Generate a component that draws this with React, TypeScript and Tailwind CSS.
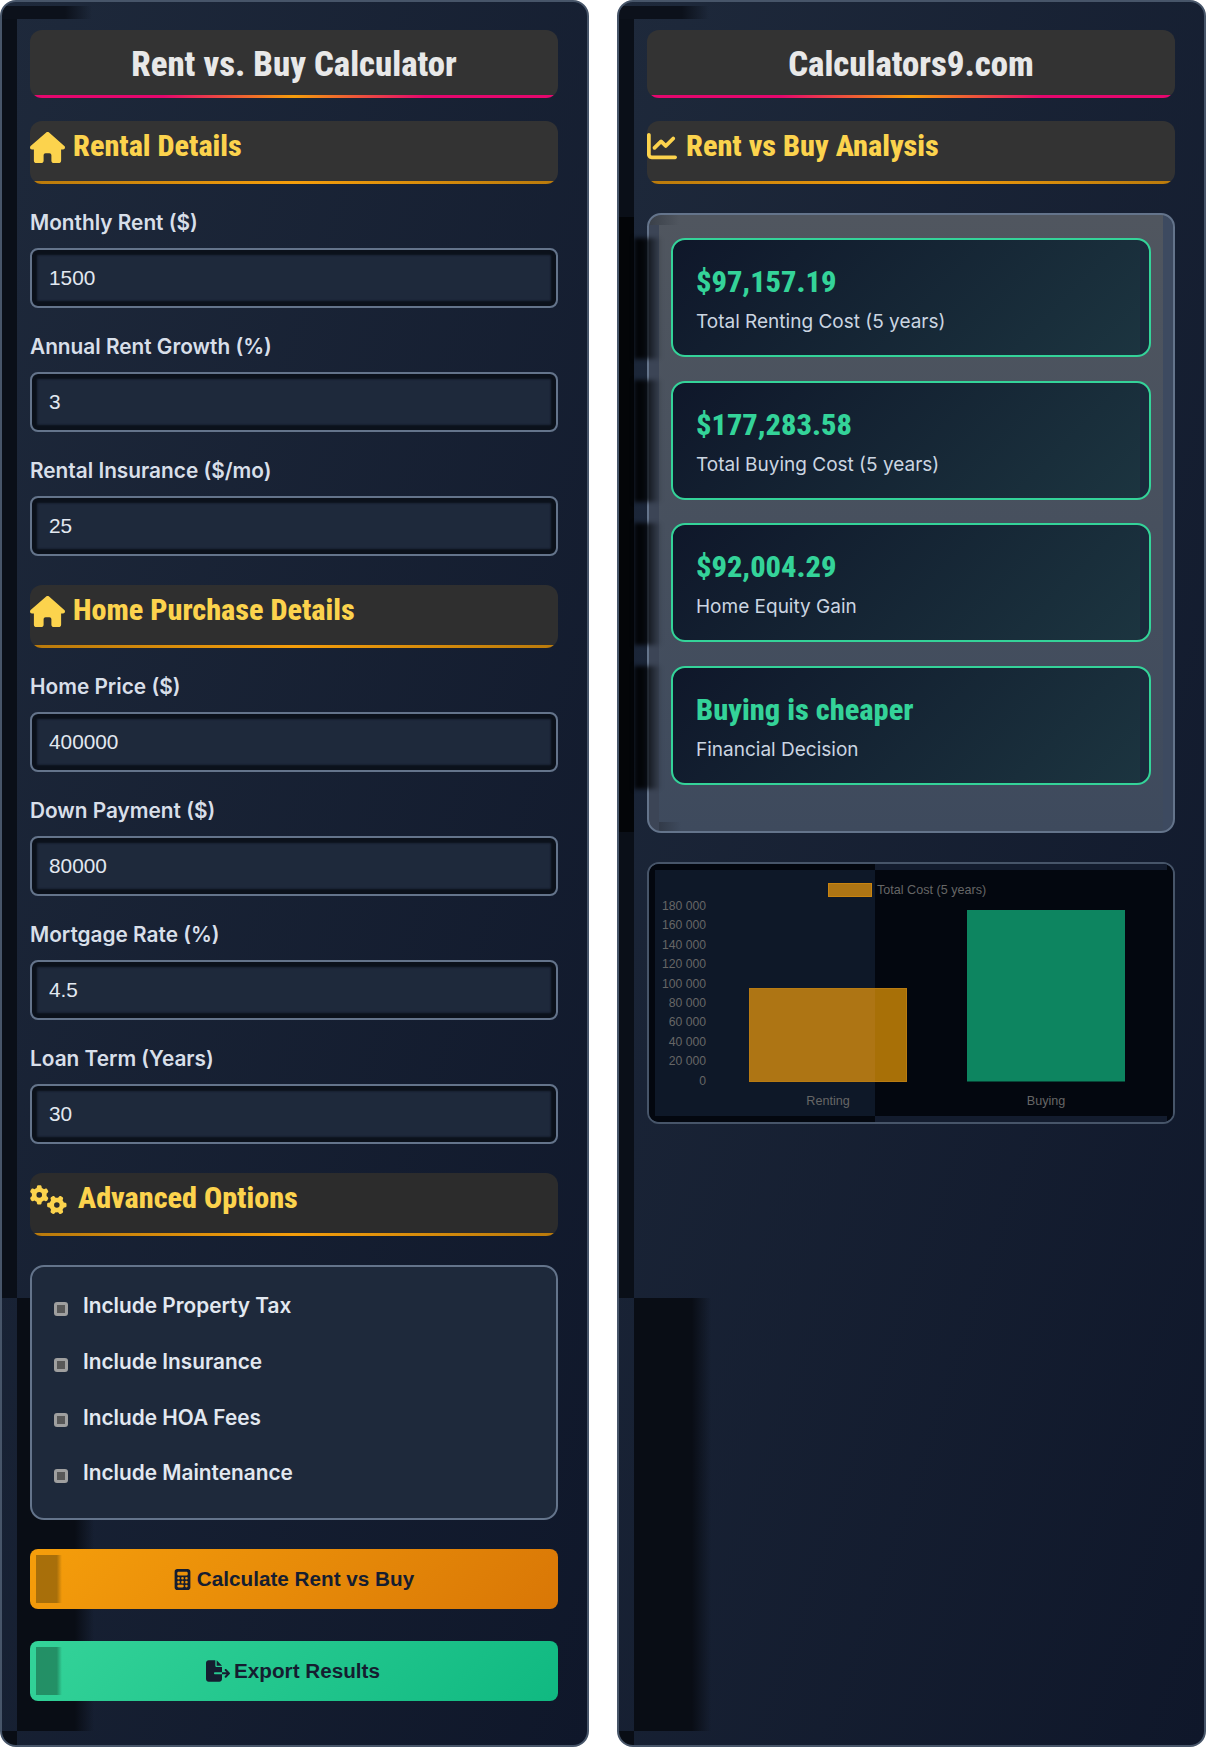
import { FaCalculator, FaChartLine, FaFileExport, FaGears, FaHouse } from "react-icons/fa6";
import type { ReactNode } from "react";

const condensed = "font-['Roboto',sans-serif] font-extrabold [font-stretch:75%]";
const inter = "font-['Inter',sans-serif]";
const panel = "h-[1747px] overflow-hidden rounded-[16px] border-2 border-[#475569] pl-[28px] pr-[29px] pt-[28px]";
const Icon = "text-[#fcd34d] shrink-0";

const Title = ({ children }: { children: ReactNode }) => (
  <div className="flex h-[68px] items-center justify-center rounded-[12px] [background:linear-gradient(to_right,#e6076e_25%,#f59e0b,#e6076e_75%)_bottom/calc(100%-4px)_3px_no-repeat,#333333]">
    <h1 className={`${condensed} text-[34.8px] text-[#e8e8e8]`}>{children}</h1>
  </div>
);

const Section = ({ icon, children, className }: { icon: ReactNode; children: ReactNode; className: string }) => (
  <div className={`flex h-[63px] items-start gap-[8px] rounded-[12px] pt-[2px] ${className}`}>
    {icon}
    <h2 className={`${condensed} text-[30.2px] text-[#fcd34d]`}>{children}</h2>
  </div>
);

const Field = ({ label, value }: { label: string; value: string }) => (
  <div className="flex h-[100px] flex-col">
    <label className={`${inter} h-[40px] text-[20.8px] font-semibold leading-[30px] text-[#d8dfe9]`}>{label}</label>
    <input
      readOnly
      value={value}
      className="h-[60px] w-full rounded-[8px] border-2 border-[#64748b] bg-[#1e293b] pl-[17px] font-['Liberation_Sans',sans-serif] text-[20.8px] text-[#e2e8f0] shadow-[inset_0_0_2px_5px_#0b111b] outline-none"
    />
  </div>
);

const Check = ({ label }: { label: string }) => (
  <div className="flex h-[55.7px] items-center gap-[15px]">
    <div className="mt-[6px] flex h-[14px] w-[14px] items-center justify-center rounded-[3px] bg-[#9f9f9f]">
      <div className="h-[8px] w-[8px] bg-[#585858]" />
    </div>
    <span className={`${inter} text-[20.8px] font-semibold text-[#e2e8f0]`}>{label}</span>
  </div>
);

const Btn = ({ icon, label, className }: { icon: ReactNode; label: string; className: string }) => (
  <button className={`flex h-[60px] w-full items-center justify-center gap-[4px] rounded-[8px] pr-[2px] font-['Liberation_Sans',sans-serif] text-[20.7px] font-bold text-[#151d30] ${className}`}>
    {icon}
    <span>{label}</span>
  </button>
);

const Card = ({ value, label }: { value: string; label: string }) => (
  <div className="h-[119px] rounded-[14px] border-2 border-[#34d399] pl-[23px] pt-[19px] [background:linear-gradient(#1a2a3c,#1a2a3c)_right/9px_100%_no-repeat,linear-gradient(135deg,#0f172a,#1c3540)]">
    <div className={`${condensed} text-[30.4px] leading-[46px] text-[#34d399]`}>{value}</div>
    <div className={`${inter} mt-[3px] text-[19px] leading-[28px] text-[#cbd5e1]`}>{label}</div>
  </div>
);

const ticks = ["180 000", "160 000", "140 000", "120 000", "100 000", "80 000", "60 000", "40 000", "20 000", "0"];

const Chart = () => (
  <svg viewBox="0 0 524 258" className="block h-[258px] w-[524px]" fontFamily="'Liberation Sans', sans-serif" fontSize="12.6" fill="#666666">
    <rect width="524" height="258" fill="#0f172a" />
    <rect x="226" width="298" height="258" fill="#131c2e" />
    <rect x="6" y="6" width="220" height="246" fill="#0e1828" />
    <rect x="226" y="6" width="292" height="246" fill="#03070f" />
    <rect x="0" width="226" height="6" fill="#03070f" />
    <rect x="0" y="252" width="226" height="6" fill="#03070f" />
    <rect x="0" width="6" height="258" fill="#03070f" />
    <rect x="518" width="6" height="258" fill="#03070f" />
    {ticks.map((t, i) => (
      <text key={t} x="57" y={42 + i * 19.4 + 4} textAnchor="end" fontSize="12.2">{t}</text>
    ))}
    <rect x="179.5" y="19.5" width="43" height="13" fill="#ae7514" stroke="#c98410" />
    <text x="228" y="29.5">Total Cost (5 years)</text>
    <rect x="100.5" y="124.5" width="157" height="93" fill="#ae7514" stroke="#b87b12" />
    <rect x="226" y="125" width="31" height="92" fill="#a87007" />
    <rect x="318" y="46" width="158" height="171.5" fill="#0d8560" />
    <text x="179" y="241" textAnchor="middle">Renting</text>
    <text x="397" y="241" textAnchor="middle">Buying</text>
  </svg>
);

export default function App() {
  return (
    <div className="grid h-[1747px] w-[1206px] grid-cols-[589px_589px] gap-[28px] bg-white">
      <div className={`${panel} [background:linear-gradient(#0a0f18,#0a0f18)_0_17px/15px_1279px_no-repeat,linear-gradient(to_right,#0c111b_70%,transparent)_0_4px/90px_13px_no-repeat,linear-gradient(to_right,#090d15_75%,transparent)_15px_1296px/77px_433px_no-repeat,linear-gradient(#090d15,#090d15)_0_1729px/15px_16px_no-repeat,linear-gradient(to_bottom_right,#1e293b,#0f172a)]`}>
        <div className="flex flex-col gap-[29px]">
          <div className="flex flex-col gap-[24px]">
            <div className="flex flex-col gap-[23px]">
              <Title>Rent vs. Buy Calculator</Title>
              <Section
                className="[background:linear-gradient(to_right,#b97a0c,#f59e0b,#b97a0c)_bottom/calc(100%-4px)_3px_no-repeat,#333333]"
                icon={<FaHouse size={35} className={`${Icon} mt-[7px]`} />}
              >
                Rental Details
              </Section>
            </div>
            <Field label="Monthly Rent ($)" value="1500" />
            <Field label="Annual Rent Growth (%)" value="3" />
            <Field label="Rental Insurance ($/mo)" value="25" />
          </div>
          <div className="flex flex-col gap-[24px]">
            <Section
              className="[background:linear-gradient(to_right,#b97a0c,#f59e0b,#b97a0c)_bottom/calc(100%-4px)_3px_no-repeat,#2f2f2f]"
              icon={<FaHouse size={35} className={`${Icon} mt-[7px]`} />}
            >
              Home Purchase Details
            </Section>
            <Field label="Home Price ($)" value="400000" />
            <Field label="Down Payment ($)" value="80000" />
            <Field label="Mortgage Rate (%)" value="4.5" />
            <Field label="Loan Term (Years)" value="30" />
          </div>
          <Section
            className="[background:linear-gradient(to_right,#b97a0c,#f59e0b,#b97a0c)_bottom/calc(100%-4px)_3px_no-repeat,#2c2c2c]"
            icon={<FaGears size={37} className={`${Icon} mr-[3px] mt-[6px]`} />}
          >
            Advanced Options
          </Section>
          <div className="flex h-[255px] flex-col rounded-[14px] border-2 border-[#64748b] bg-[#1e293b] pl-[22px] pt-[11px]">
            <Check label="Include Property Tax" />
            <Check label="Include Insurance" />
            <Check label="Include HOA Fees" />
            <Check label="Include Maintenance" />
          </div>
          <div className="flex flex-col gap-[32px]">
            <Btn
              icon={<FaCalculator size={21} />}
              label="Calculate Rent vs Buy"
              className="[background:linear-gradient(to_right,#a86f0a_80%,transparent)_6px_6px/26px_48px_no-repeat,linear-gradient(135deg,#f59e0b,#d97706)]"
            />
            <Btn
              icon={<FaFileExport size={24} />}
              label="Export Results"
              className="[background:linear-gradient(to_right,#239066_80%,transparent)_6px_6px/26px_48px_no-repeat,linear-gradient(135deg,#34d399,#10b981)]"
            />
          </div>
        </div>
      </div>

      <div className={`relative ${panel} [background:linear-gradient(#030508,#030508)_0_215px/15px_615px_no-repeat,linear-gradient(#0a0f18,#0a0f18)_0_17px/15px_1279px_no-repeat,linear-gradient(to_right,#0c111b_70%,transparent)_0_4px/90px_13px_no-repeat,linear-gradient(to_right,#090d15_75%,transparent)_15px_1296px/77px_433px_no-repeat,linear-gradient(#090d15,#090d15)_0_1729px/15px_16px_no-repeat,linear-gradient(to_bottom_right,#1e293b,#0f172a)]`}>
        <div className="flex flex-col gap-[29px]">
          <div className="flex flex-col gap-[23px]">
            <Title>Calculators9.com</Title>
            <Section
              className="[background:linear-gradient(to_right,#b97a0c,#f59e0b,#b97a0c)_bottom/calc(100%-4px)_3px_no-repeat,#333333]"
              icon={<FaChartLine size={30} className={`${Icon} mr-[1px] mt-[8px]`} />}
            >
              Rent vs Buy Analysis
            </Section>
          </div>
          <div className="flex h-[620px] flex-col gap-[23.7px] rounded-[14px] border-2 border-[#64748b] p-[22px] pt-[23px] [background:linear-gradient(#3c4556,#3c4556)_0_10px/10px_100%_no-repeat,linear-gradient(to_right,#3a4049,transparent)_0_0/30px_10px_no-repeat,linear-gradient(to_right,#2c333f,transparent)_0_100%/32px_9px_no-repeat,linear-gradient(#3d4a60,#3d4a60)_100%_0/10px_100%_no-repeat,linear-gradient(#50565f,#3e4a5d)]">
            <Card value="$97,157.19" label="Total Renting Cost (5 years)" />
            <Card value="$177,283.58" label="Total Buying Cost (5 years)" />
            <Card value="$92,004.29" label="Home Equity Gain" />
            <Card value="Buying is cheaper" label="Financial Decision" />
          </div>
          <div className="overflow-hidden rounded-[12px] border-2 border-[#475569]">
            <Chart />
          </div>
        </div>
        {/* dark smear that sits over the results box edge */}
        <div className="absolute left-[15px] top-[236px] flex w-[27px] flex-col gap-[21px]">
          <div className="h-[121px] bg-gradient-to-r from-[#030508] from-30% to-transparent blur-[2px]" />
          <div className="h-[122px] bg-gradient-to-r from-[#030508] from-30% to-transparent blur-[2px]" />
          <div className="h-[122px] bg-gradient-to-r from-[#030508] from-30% to-transparent blur-[2px]" />
          <div className="h-[123px] bg-gradient-to-r from-[#030508] from-30% to-transparent blur-[2px]" />
        </div>
      </div>
    </div>
  );
}
